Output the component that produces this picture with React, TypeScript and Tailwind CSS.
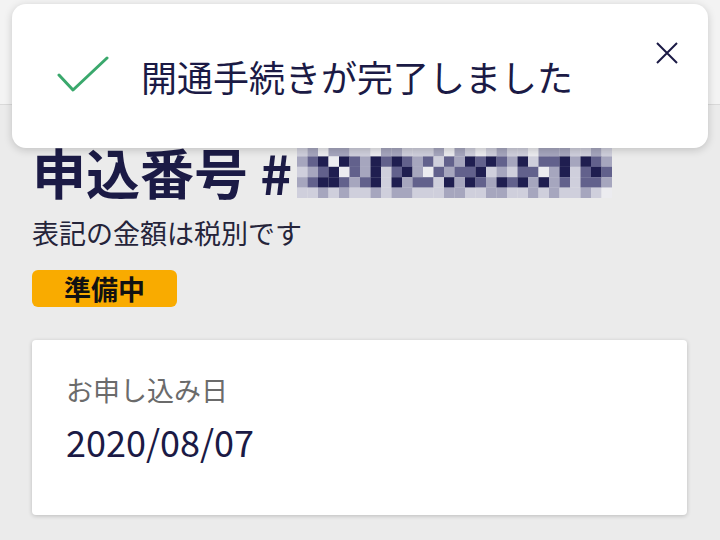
const mosaic = [
  "120221102211120210121102221121",
  "234043243432313243432413342432",
  "123403241342032334121330241343",
  "234432341423314243243424231332",
  "112121121221112211221121211210",
];

const shades = ["#ececf0", "#cfcfdc", "#a6a6be", "#62618c", "#1f1e50"];

function Mosaic() {
  return (
    <svg width="315" height="52" viewBox="0 0 315 52" className="ml-[5px] block">
      {mosaic.map((row, r) =>
        row.split("").map((c, i) => (
          <rect key={r + "-" + i} x={i * 10.5} y={r * 10.4} width="10.6" height="10.5" fill={shades[Number(c)]} />
        ))
      )}
    </svg>
  );
}

export default function App() {
  return (
    <div className="relative h-[540px] w-[720px] overflow-hidden bg-[#ebebeb] font-['Noto_Sans_CJK_JP','Noto_Sans',sans-serif] text-[#1b1a45]">
      {/* Header behind toast */}
      <div className="h-[105px] border-b border-[#d9d9d9] bg-[#f3f3f3]" />

      {/* Toast */}
      <div className="absolute left-[12px] top-[4px] flex h-[144px] w-[696px] items-center rounded-[14px] bg-white shadow-[0_2px_8px_rgba(0,0,0,0.18)]">
        <svg width="56" height="40" viewBox="0 0 56 40" className="ml-[43px]">
          <path d="M4 19 L18 34 L52 2" fill="none" stroke="#3aa86c" strokeWidth="3" strokeLinecap="round" strokeLinejoin="round" />
        </svg>
        <span className="ml-[30px] text-[36px] leading-none">開通手続きが完了しました</span>
        <svg width="22" height="22" viewBox="0 0 22 22" className="absolute right-[30px] top-[38px]">
          <path d="M1 1 L21 21 M21 1 L1 21" stroke="#1b1a45" strokeWidth="2" />
        </svg>
      </div>

      {/* Content */}
      <div className="px-[32px]">
        <div className="mt-[40px] flex items-center">
          <h1 className="text-[54px] font-bold leading-none">申込番号 #</h1>
          <Mosaic />
        </div>
        <p className="mt-[20px] text-[27px] leading-none text-[#25243a]">表記の金額は税別です</p>
        <div className="mt-[24px] flex h-[37px] w-[145px] items-center justify-center rounded-[6px] bg-[#f9ab00] text-[27px] font-bold leading-none text-[#111]">
          準備中
        </div>
        <div className="mt-[33px] mr-[1px] h-[175px] rounded-[4px] bg-white px-[34px] pt-[36px] shadow-[0_1px_4px_rgba(0,0,0,0.2)]">
          <p className="text-[27px] leading-none text-[#6b6b6b]">お申し込み日</p>
          <p className="mt-[20px] text-[36px] leading-none">2020/08/07</p>
        </div>
      </div>
    </div>
  );
}
